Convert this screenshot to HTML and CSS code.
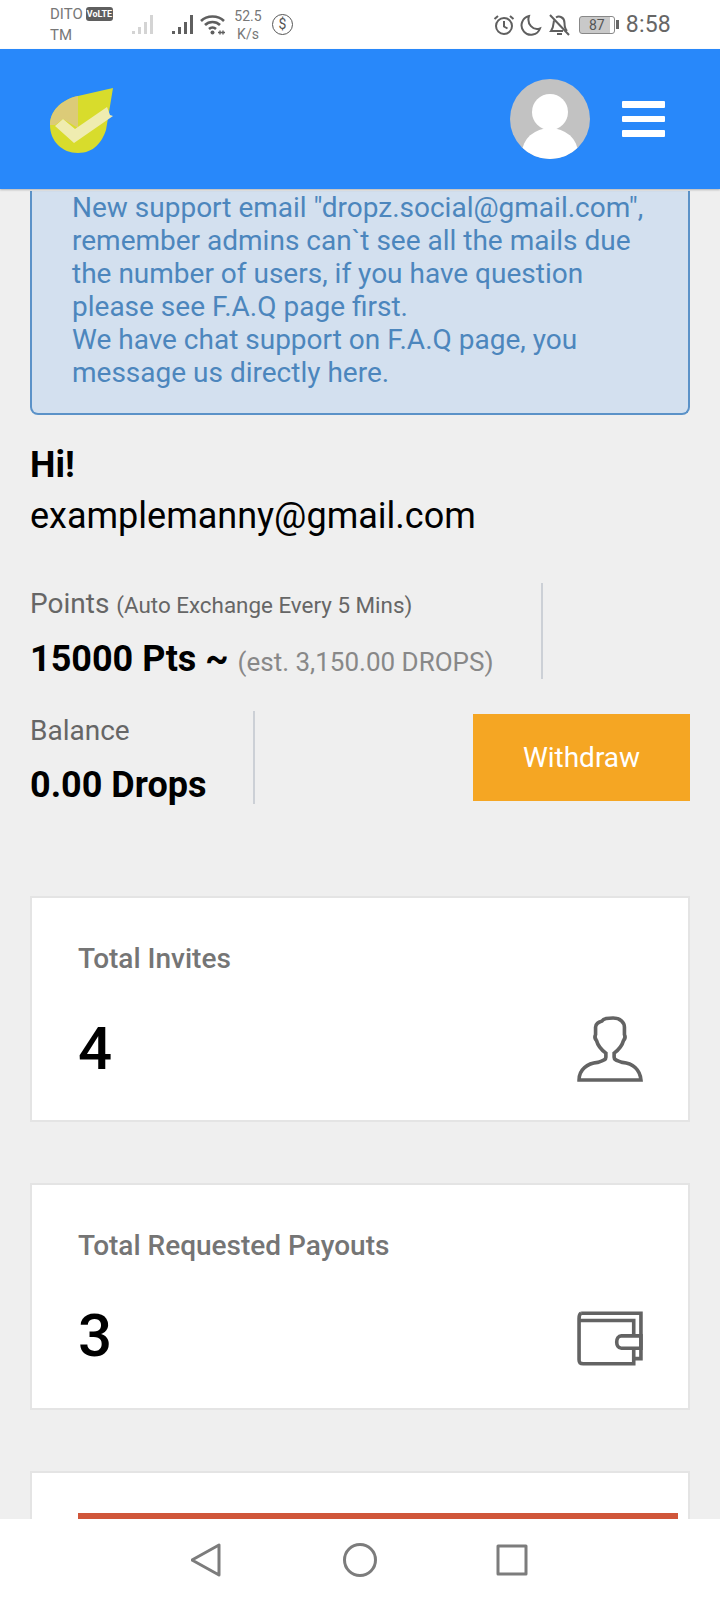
FILE: index.html
```html
<!DOCTYPE html>
<html lang="en">
<head>
    <meta charset="UTF-8">
    <meta name="viewport" content="width=device-width, initial-scale=1.0">
    <title>Dashboard</title>
    <link rel="stylesheet" href="styles.css">
</head>
<body>
    <div class="status-bar">
        <div class="carrier">
            <div class="carrier-top">DITO <span class="volte">VoLTE</span></div>
            <div>TM</div>
        </div>
        <svg class="signal" width="24" height="22" viewBox="0 0 24 22" fill="#d4d4d4">
            <rect x="1" y="17" width="3" height="3"/><rect x="7" y="13" width="3" height="7"/><rect x="13" y="8" width="3" height="12"/><rect x="19" y="1" width="3" height="19"/>
        </svg>
        <svg class="signal signal-main" width="24" height="22" viewBox="0 0 24 22" fill="#5f5f5f">
            <rect x="1" y="17" width="3" height="3"/><rect x="7" y="13" width="3" height="7"/><rect x="13" y="8" width="3" height="12"/><rect x="19" y="1" width="3" height="19"/>
        </svg>
        <svg class="wifi" width="26" height="22" viewBox="0 0 26 22" fill="none" stroke="#5f5f5f" stroke-width="2.6">
            <path d="M1 7C7 1 18 1 24 7"/>
            <path d="M5 11C9 7 16 7 20 11"/>
            <path d="M9 15C11 13.200 14 13.200 16 15"/>
            <circle cx="12.500" cy="18.500" r="2" fill="#5f5f5f" stroke="none"/>
            <path d="M18 18.500h7M20 16.500v4M23 16.500v4" stroke-width="1.400"/>
        </svg>
        <div class="speed"><div>52.5</div><div>K/s</div></div>
        <div class="dollar">$</div>
        <div class="status-right">
            <svg width="22" height="22" viewBox="0 0 22 22" fill="none" stroke="#5f5f5f" stroke-width="2">
                <circle cx="11" cy="12" r="8"/><path d="M11 7v5.500l3.500 2"/><path d="M1.500 5l3.500-3M20.500 5l-3.500-3"/>
            </svg>
            <svg class="moon" width="22" height="22" viewBox="0 0 22 22" fill="none" stroke="#5f5f5f" stroke-width="2">
                <path d="M9 2a9.500 9.500 0 1 0 11 12.500C13 17 6.500 10 9 2z"/>
            </svg>
            <svg class="bell" width="21" height="22" viewBox="0 0 21 22" fill="none" stroke="#5f5f5f" stroke-width="2">
                <path d="M5 6.500C4.500 8 5 13 2 17H14M7 3.500C10 1.500 15.500 3 15.500 9C15.500 12 16 15 18 17"/><path d="M8 20h5"/><path d="M1 1l19 20"/>
            </svg>
            <div class="battery"><span class="battery-level">87</span></div>
            <div class="battery-tip"></div>
            <div class="clock">8:58</div>
        </div>
    </div>

    <header class="top-bar">
        <svg class="logo" width="66" height="66" viewBox="0 0 66 66">
            <path d="M63 0L28 8C10 12 0 24 0 37C0 53 12 65 28 65C44 65 52 54 56 42z" fill="#d8dc2c"/>
            <path d="M28 8C10 12 0 24 0 37L5 37L13 31L28 40z" fill="#dccb78"/>
            <path d="M5 38L13 31L25 41L57 19L60 27L63 28L24 55z" fill="#efecb0"/>
        </svg>
        <div class="top-actions">
            <div class="avatar">
                <div class="avatar-head"></div>
                <div class="avatar-body"></div>
            </div>
            <div class="burger"><span></span><span></span><span></span></div>
        </div>
    </header>

    <main class="content">
        <div class="notice">
            New support email "dropz.social@gmail.com", remember admins can`t see all the mails due the number of users, if you have question please see F.A.Q page first.<br>
            We have chat support on F.A.Q page, you message us directly here.
        </div>

        <div class="greeting">
            <div class="hi">Hi!</div>
            <div class="email">examplemanny@gmail.com</div>
        </div>

        <div class="stat-row">
            <div class="stat stat-points">
                <div class="stat-label">Points <small>(Auto Exchange Every 5 Mins)</small></div>
                <div class="stat-value">15000 Pts ~ <span class="est">(est. 3,150.00 DROPS)</span></div>
            </div>
        </div>

        <div class="balance-row">
            <div class="stat stat-balance">
                <div class="stat-label">Balance</div>
                <div class="stat-value">0.00 Drops</div>
            </div>
            <button class="withdraw">Withdraw</button>
        </div>

        <div class="card card-invites">
            <div class="card-title">Total Invites</div>
            <div class="card-body">
                <div class="card-num">4</div>
                <svg width="66" height="66" viewBox="0 0 64 64" fill="none" stroke="#636363" stroke-width="3.500">
                    <path d="M2 62C2 52 10 46 20 45C27 43 28 42 28 40V36C24 33 20 28 19 24C17 22 17 20 18 18V11C18 7 21 6 24 5C26 2 30 2 35 2C42 2 46 6 46 11V18C47 20 47 22 45 24C44 28 40 33 36 36V40C36 42 37 43 44 45C54 46 61 52 62 62z"/>
                </svg>
            </div>
        </div>

        <div class="card card-payouts">
            <div class="card-title">Total Requested Payouts</div>
            <div class="card-body">
                <div class="card-num">3</div>
                <svg class="wallet" width="66" height="55" viewBox="0 0 64 53" fill="none" stroke="#636363" stroke-width="3.500">
                    <path d="M4 2H62V46H55"/>
                    <path d="M4 2C2 3 2 5 2 7V47C2 50 3 51 6 51H55V36"/>
                    <path d="M2 9H55V24"/>
                    <path d="M62 24H43C37 24 37 36 43 36H62z"/>
                </svg>
            </div>
        </div>

        <div class="card card-last">
            <div class="red-bar"></div>
        </div>
    </main>

    <nav class="nav-bar">
        <svg width="36" height="36" viewBox="0 0 36 36" fill="none" stroke="#7c7c7c" stroke-width="3" stroke-linejoin="round">
            <path d="M28 3V33L1 18z"/>
        </svg>
        <svg width="36" height="36" viewBox="0 0 36 36" fill="none" stroke="#7c7c7c" stroke-width="3">
            <circle cx="18" cy="18" r="15.500"/>
        </svg>
        <svg width="36" height="36" viewBox="0 0 36 36" fill="none" stroke="#7c7c7c" stroke-width="3" stroke-linejoin="round">
            <rect x="5" y="4" width="28" height="28"/>
        </svg>
    </nav>
</body>
</html>
```

FILE: styles.css
```css
* { box-sizing: border-box; }
body { margin: 0; width: 720px; height: 1600px; display: flex; flex-direction: column; overflow: hidden; font-family: Roboto, sans-serif; background: #efefef; color: #000; }

/* status bar */
.status-bar { height: 49px; flex: none; background: #fff; display: flex; align-items: center; padding: 0 50px; color: #666; font-size: 14px; }
.carrier { width: 81px; line-height: 21px; color: #777; font-size: 15px; }
.carrier-top { display: flex; align-items: center; gap: 3px; white-space: nowrap; }
.volte { background: #5f5f5f; color: #fff; font-size: 9px; font-weight: 700; padding: 2px 1px; border-radius: 3px; line-height: 10px; }
.signal-main { margin-left: 16px; }
.wifi { margin-left: 5px; }
.speed { margin-left: 7px; font-size: 14px; line-height: 18px; text-align: center; color: #777; width: 30px; }
.dollar { margin-left: 9px; width: 21px; height: 21px; border: 1px solid #555; border-radius: 50%; font-size: 14px; line-height: 19px; text-align: center; color: #555; }
.status-right { margin-left: auto; display: flex; align-items: center; margin-right: -1px; }
.moon { margin-left: 5px; }
.bell { margin-left: 7px; }
.battery { width: 36px; height: 18px; border: 1px solid #888; border-radius: 3px; margin-left: 9px; overflow: hidden; background: linear-gradient(90deg, #c9c9c9 87%, #fff 87%); }
.battery-level { display: block; font-size: 14px; line-height: 16px; text-align: center; color: #555; }
.battery-tip { width: 3px; height: 9px; background: #666; margin-left: 1px; }
.clock { font-size: 23px; color: #666; margin-left: 7px; letter-spacing: 0.2px; }

/* blue header */
.top-bar { height: 140px; flex: none; background: #2888fa; display: flex; align-items: center; justify-content: space-between; padding: 0 55px 0 50px; position: relative; box-shadow: 0 1px 2px rgba(0,0,0,0.25); z-index: 1; }
.logo { margin-top: 4px; }
.top-actions { display: flex; align-items: center; gap: 32px; }
.avatar { width: 80px; height: 80px; border-radius: 50%; background: #c2c2c2; overflow: hidden; display: flex; flex-direction: column; align-items: center; }
.avatar-head { width: 36px; height: 36px; border-radius: 50%; background: #fff; margin-top: 15px; flex: none; }
.avatar-body { width: 56px; height: 50px; border-radius: 50%; background: #fff; margin-top: -2px; flex: none; }
.burger { width: 43px; display: flex; flex-direction: column; gap: 8px; }
.burger span { height: 6.500px; background: #fff; border-radius: 1px; }

/* page */
.content { flex: 1; overflow: hidden; padding: 0 30px; }
.notice { background: #d3e0ef; border: 2px solid #5b92c8; border-top: none; border-radius: 0 0 8px 8px; color: #4c86bd; font-size: 28px; line-height: 33px; margin-top: 2px; padding: 0 30px 24px 40px; }
.greeting { margin-top: 27px; }
.hi { font-size: 36px; font-weight: 700; line-height: 46px; }
.email { font-size: 36px; line-height: 56px; }
.stat-label { font-size: 28px; line-height: 40px; color: #666; }
.stat-label small { font-size: 22.400px; }
.stat-value { font-size: 36px; font-weight: 700; line-height: 44px; margin-top: 12px; white-space: nowrap; }
.est { font-size: 26px; font-weight: 400; color: #888; }
.stat-row { margin-top: 39px; }
.stat { border-right: 2px solid #ccd0d6; }
.stat-points { width: 513px; height: 96px; padding-top: 1px; }
.balance-row { display: flex; justify-content: space-between; align-items: center; margin-top: 32px; }
.stat-balance { width: 225px; height: 93px; }
.withdraw { width: 217px; height: 87px; background: #f5a623; color: #fff; border: none; font-family: inherit; font-size: 28px; }
.card { background: #fff; border: 2px solid #e4e4e4; padding: 0 45px 0 46px; margin-bottom: 61px; }
.card-invites { margin-top: 92px; height: 226px; }
.card-payouts { height: 227px; }
.card-last { height: 200px; padding: 40px 10px 0 46px; }
.card-title { font-size: 28px; font-weight: 500; color: #757575; margin-top: 44px; line-height: 34px; }
.card-body { display: flex; justify-content: space-between; align-items: center; margin-top: 35px; }
.card-num { font-size: 60px; font-weight: 500; line-height: 76px; }
.wallet { margin-top: 4px; }
.red-bar { height: 6px; background: #d0563a; }

/* android nav */
.nav-bar { height: 81px; flex: none; background: #fff; display: flex; justify-content: center; align-items: center; gap: 115px; }
```
